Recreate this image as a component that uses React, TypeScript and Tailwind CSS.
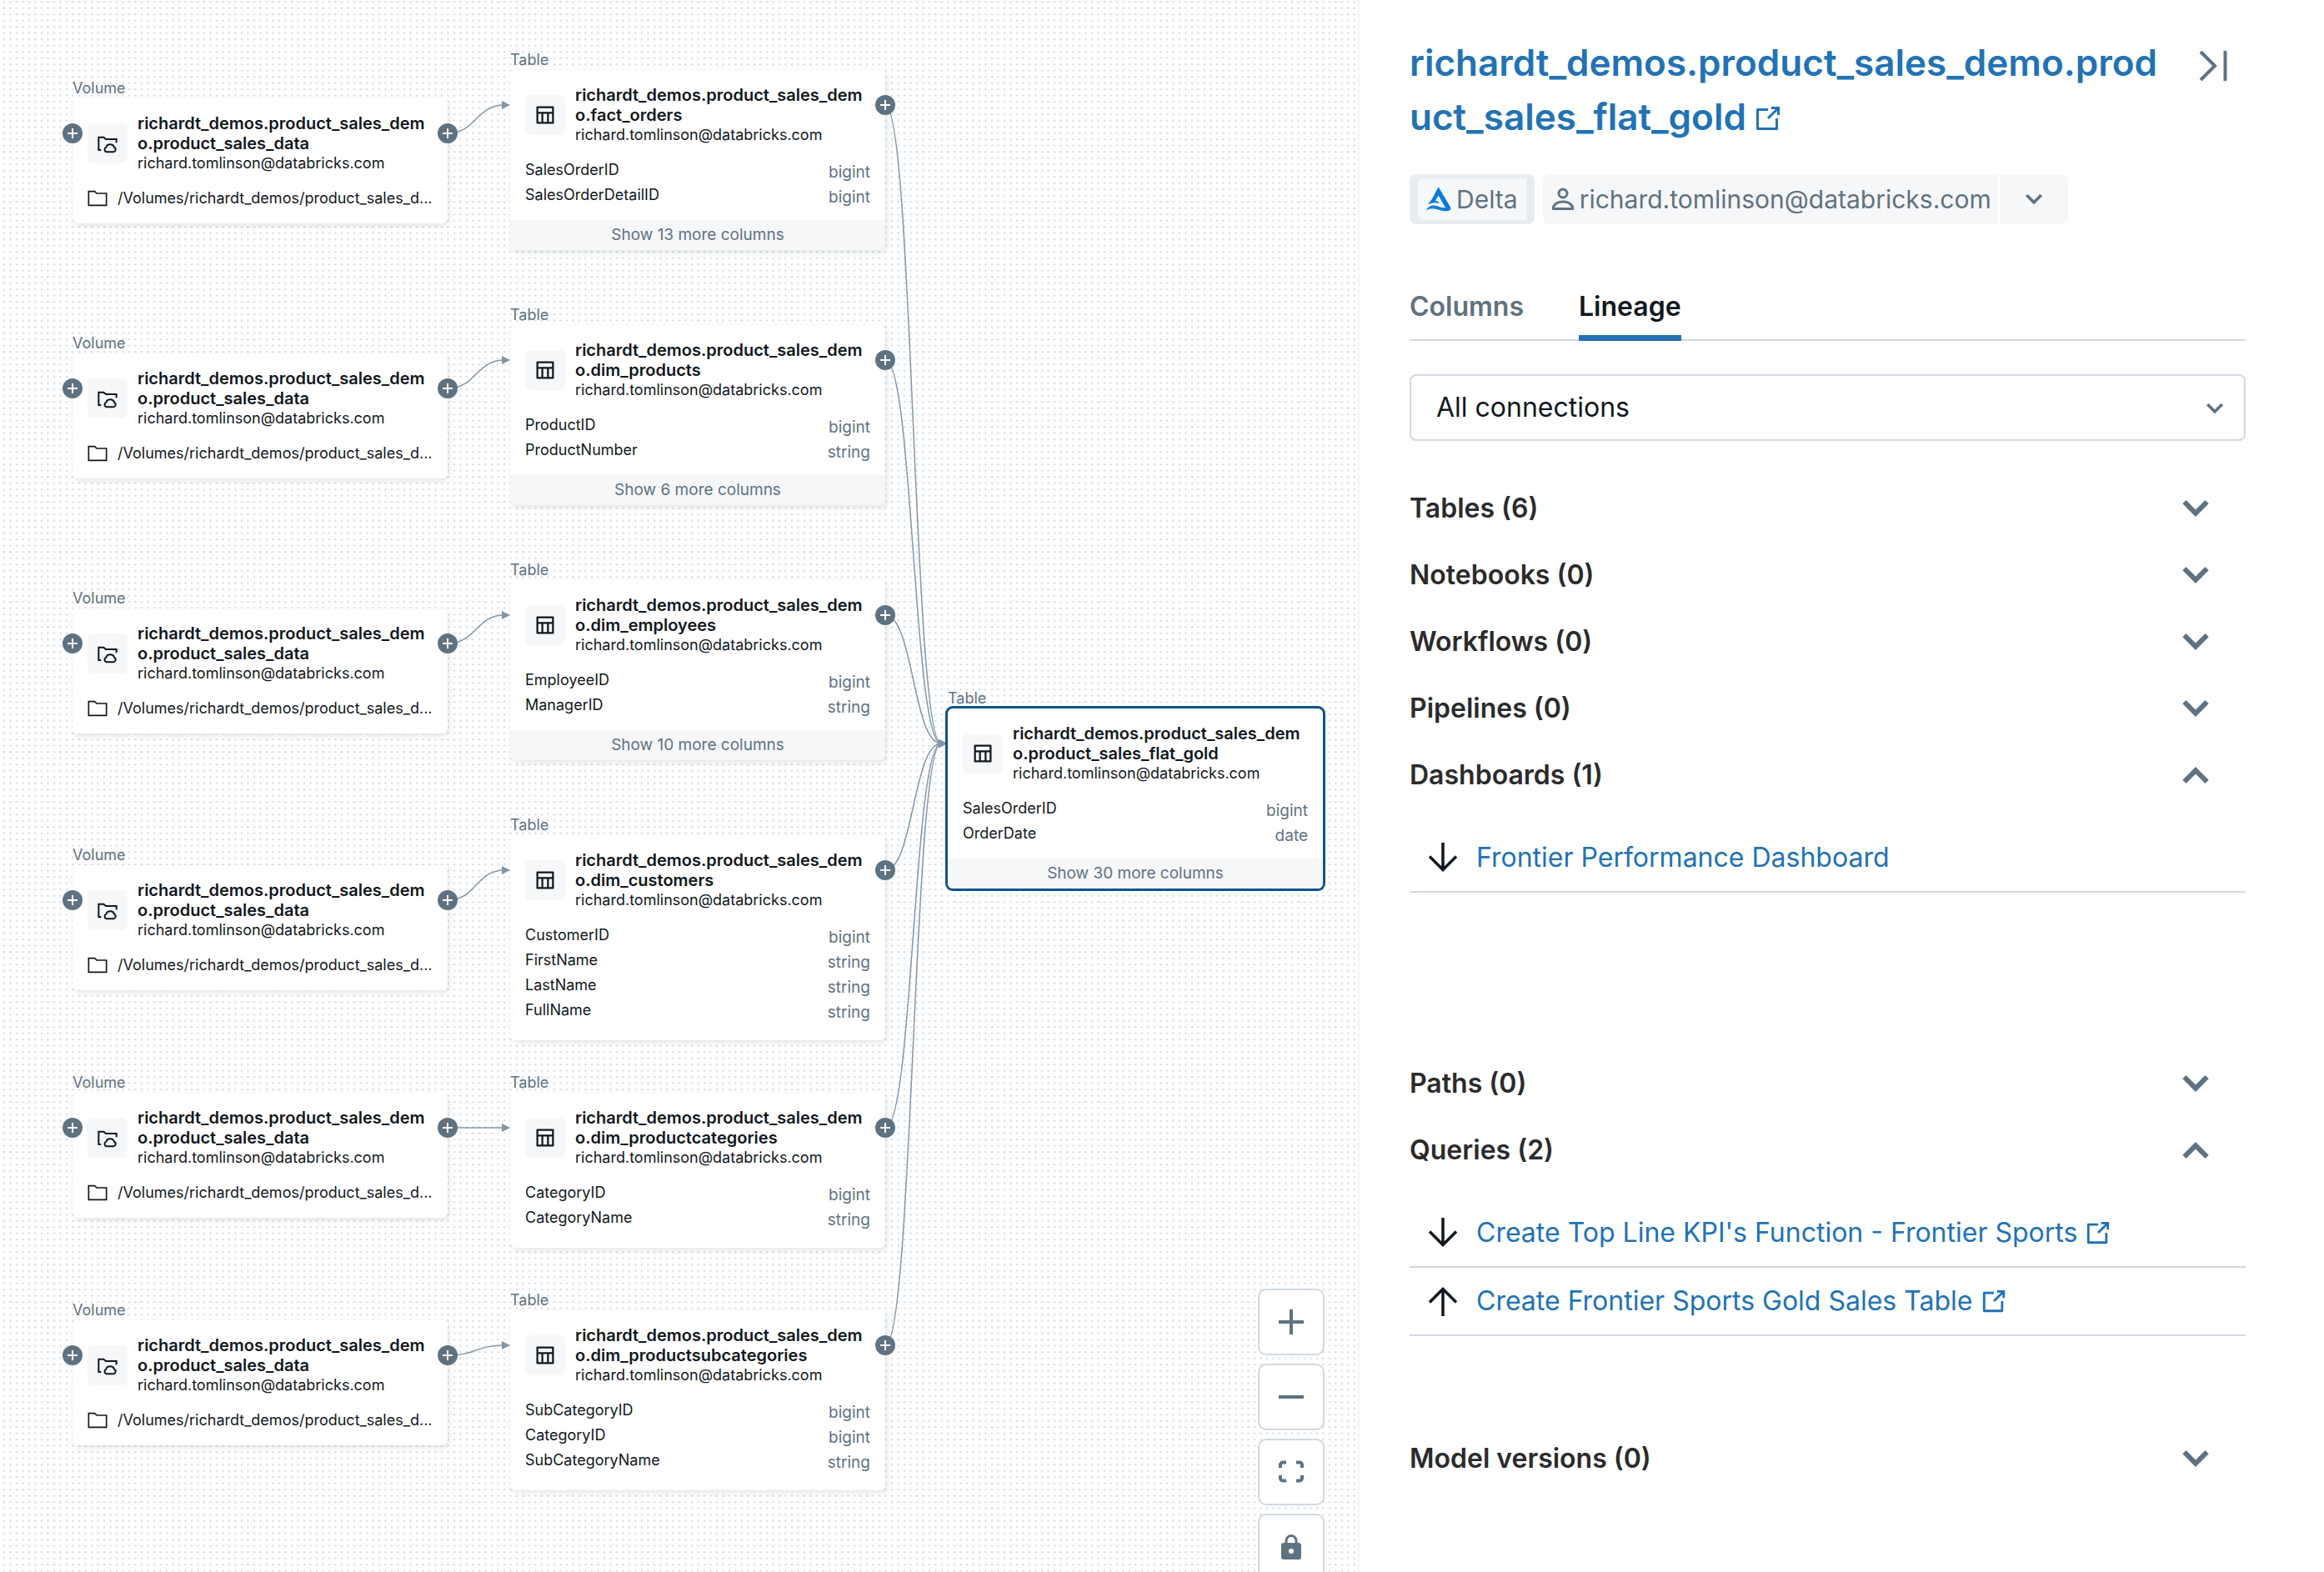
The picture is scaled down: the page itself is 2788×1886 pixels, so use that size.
// App.tsx
import { useState } from 'react';
import type { ReactNode } from 'react';

type Column = { name: string; type: string };

type TableNodeData = {
  id: string;
  title: string;
  x: number;
  y: number;
  columns: Column[];
  more?: number;
  selected?: boolean;
};

const OWNER = 'richard.tomlinson@databricks.com';
const NODE_WIDTH = 450;
const HANDLE_OFFSET = 42;

const volumes = [
  { id: 'v1', x: 87, y: 118 },
  { id: 'v2', x: 87, y: 424 },
  { id: 'v3', x: 87, y: 730 },
  { id: 'v4', x: 87, y: 1038 },
  { id: 'v5', x: 87, y: 1311 },
  { id: 'v6', x: 87, y: 1584 },
];

const tables: TableNodeData[] = [
  {
    id: 't1',
    title: 'richardt_demos.product_sales_demo.fact_orders',
    x: 612,
    y: 84,
    columns: [
      { name: 'SalesOrderID', type: 'bigint' },
      { name: 'SalesOrderDetailID', type: 'bigint' },
    ],
    more: 13,
  },
  {
    id: 't2',
    title: 'richardt_demos.product_sales_demo.dim_products',
    x: 612,
    y: 390,
    columns: [
      { name: 'ProductID', type: 'bigint' },
      { name: 'ProductNumber', type: 'string' },
    ],
    more: 6,
  },
  {
    id: 't3',
    title: 'richardt_demos.product_sales_demo.dim_employees',
    x: 612,
    y: 696,
    columns: [
      { name: 'EmployeeID', type: 'bigint' },
      { name: 'ManagerID', type: 'string' },
    ],
    more: 10,
  },
  {
    id: 't4',
    title: 'richardt_demos.product_sales_demo.dim_customers',
    x: 612,
    y: 1002,
    columns: [
      { name: 'CustomerID', type: 'bigint' },
      { name: 'FirstName', type: 'string' },
      { name: 'LastName', type: 'string' },
      { name: 'FullName', type: 'string' },
    ],
  },
  {
    id: 't5',
    title: 'richardt_demos.product_sales_demo.dim_productcategories',
    x: 612,
    y: 1311,
    columns: [
      { name: 'CategoryID', type: 'bigint' },
      { name: 'CategoryName', type: 'string' },
    ],
  },
  {
    id: 't6',
    title: 'richardt_demos.product_sales_demo.dim_productsubcategories',
    x: 612,
    y: 1572,
    columns: [
      { name: 'SubCategoryID', type: 'bigint' },
      { name: 'CategoryID', type: 'bigint' },
      { name: 'SubCategoryName', type: 'string' },
    ],
  },
];

const goldTable: TableNodeData = {
  id: 'gold',
  title: 'richardt_demos.product_sales_demo.product_sales_flat_gold',
  x: 1137,
  y: 850,
  columns: [
    { name: 'SalesOrderID', type: 'bigint' },
    { name: 'OrderDate', type: 'date' },
  ],
  more: 30,
  selected: true,
};

const ExternalLinkIcon = ({ className }: { className: string }) => (
  <svg viewBox="0 0 16 16" fill="currentColor" className={className} aria-hidden="true">
    <path d="M10 1h5v5h-1.5V3.56L8.53 8.53 7.47 7.47l4.97-4.97H10z" />
    <path d="M1 2.75A.75.75 0 0 1 1.75 2H8v1.5H2.5v10h10V8H14v6.25a.75.75 0 0 1-.75.75H1.75a.75.75 0 0 1-.75-.75z" />
  </svg>
);

const ChevronIcon = ({ up = false, className }: { up?: boolean; className: string }) => (
  <svg viewBox="0 0 16 16" fill="currentColor" className={className} aria-hidden="true">
    {up ? (
      <path d="M8 4.9 13.1 10 12 11.1l-4-4-4 4L2.9 10z" stroke="currentColor" strokeWidth="0.5" />
    ) : (
      <path d="M8 11.1 2.9 6 4 4.9l4 4 4-4L13.1 6z" stroke="currentColor" strokeWidth="0.5" />
    )}
  </svg>
);

const ArrowIcon = ({ up = false }: { up?: boolean }) => (
  <svg
    viewBox="0 0 36 36"
    fill="none"
    stroke="currentColor"
    strokeWidth="3.5"
    className="size-9 shrink-0 text-[#11171C]"
    aria-hidden="true"
  >
    {up ? <path d="M18 36V3M2 19.5 18 3.5l16 16" /> : <path d="M18 0v33M2 16.5l16 16 16-16" />}
  </svg>
);

const TableIcon = () => (
  <svg viewBox="0 0 16 16" fill="currentColor" className="size-6" aria-hidden="true">
    <path
      fillRule="evenodd"
      clipRule="evenodd"
      d="M1 1.75A.75.75 0 0 1 1.75 1h12.5a.75.75 0 0 1 .75.75v12.5a.75.75 0 0 1-.75.75H1.75a.75.75 0 0 1-.75-.75zm1.5.75v3h11v-3zm0 11V7H5v6.500zm4 0h3V7h-3zM11 7v6.500h2.500V7z"
    />
  </svg>
);

const CloudFolderIcon = () => (
  <svg viewBox="0 0 72 72" fill="none" stroke="currentColor" strokeWidth="6" className="size-6" aria-hidden="true">
    <path d="M13 60H4V14h18l8 7h38v13" />
    <path d="M32 67h26a9 9 0 0 0 2-17 15 14 0 0 0-29 0 9 9 0 0 0 1 17z" />
  </svg>
);

const FolderIcon = () => (
  <svg
    viewBox="0 0 72 72"
    fill="none"
    stroke="currentColor"
    strokeWidth="5"
    className="size-6 shrink-0"
    aria-hidden="true"
  >
    <path d="M4 11h22l7 7h35v43H4z" />
  </svg>
);

const DeltaIcon = () => (
  <svg viewBox="84 74 88 88" fill="#077CDC" className="size-[30px]" aria-hidden="true">
    <path d="M127 75l43 72c2 8-6 13-18 13-25 0-35-17-68-4 7-15 24-20 42-13 10 4 18 6 25 4l-24-42-11 18c7 1 12 4 15 9-13-3-26-2-40 4 4-8 9-12 13-18z" />
  </svg>
);

const UserIcon = () => (
  <svg viewBox="0 0 28 28" fill="none" stroke="currentColor" strokeWidth="3" className="size-7" aria-hidden="true">
    <circle cx="14" cy="7" r="5" />
    <path d="M2.500 25.500v-2.500c2-4 6.500-6 11.500-6s9.500 2 11.500 6v2.500z" />
  </svg>
);

const Handle = ({ side }: { side: 'left' | 'right' }) => (
  <button
    type="button"
    aria-label="Expand connections"
    className={`absolute top-[30px] flex size-6 items-center justify-center rounded-full bg-[#5F7281] text-white ${
      side === 'left' ? '-left-3' : '-right-3'
    }`}
  >
    <svg viewBox="0 0 12 12" stroke="currentColor" strokeWidth="2" className="size-3" aria-hidden="true">
      <path d="M6 0v12M0 6h12" />
    </svg>
  </button>
);

const NodeHeader = ({ icon, title }: { icon: ReactNode; title: string }) => (
  <div className="flex items-center gap-3 px-[18px] pt-[18px]">
    <div className="flex size-12 shrink-0 items-center justify-center rounded-md bg-[#F6F7F9]">{icon}</div>
    <div className="w-[354px]">
      <h3 className="text-[20px]/6 font-semibold break-all">{title}</h3>
      <p className="text-lg/6">{OWNER}</p>
    </div>
  </div>
);

const VolumeNode = ({ x, y }: { x: number; y: number }) => (
  <article
    className="absolute w-[450px] rounded-md bg-white shadow-[2px_3px_6px_rgba(27,49,57,0.12)]"
    style={{ left: x, top: y }}
  >
    <span className="absolute -top-6 left-0 text-lg/6 text-[#5F7281]">Volume</span>
    <NodeHeader icon={<CloudFolderIcon />} title="richardt_demos.product_sales_demo.product_sales_data" />
    <div className="flex items-center gap-3 p-[18px] text-lg/6 whitespace-nowrap">
      <FolderIcon />
      <span>/Volumes/richardt_demos/product_sales_d...</span>
    </div>
    <Handle side="left" />
    <Handle side="right" />
  </article>
);

const TableNode = ({ node }: { node: TableNodeData }) => (
  <article
    className={`absolute w-[450px] rounded-md bg-white ${
      node.selected ? 'ring-3 ring-[#0E538B]' : 'shadow-[2px_3px_6px_rgba(27,49,57,0.12)]'
    }`}
    style={{ left: node.x, top: node.y }}
  >
    <span className="absolute -top-6 left-0 text-lg/6 text-[#5F7281]">Table</span>
    <NodeHeader icon={<TableIcon />} title={node.title} />
    <div className={`px-[18px] pt-[18px] ${node.more ? 'pb-3' : 'pb-[18px]'}`}>
      <table className="w-full">
        <tbody>
          {node.columns.map((column) => (
            <tr key={column.name}>
              <td className="p-0 align-top text-lg/6">{column.name}</td>
              <td className="p-0 text-right text-[19px]/[30px] text-[#5F7281]">{column.type}</td>
            </tr>
          ))}
        </tbody>
      </table>
    </div>
    {node.more && (
      <button
        type="button"
        className="flex h-9 w-full items-center justify-center rounded-b-md bg-[#F6F7F9] text-[19px]/[30px] text-[#5F7281]"
      >
        Show {node.more} more columns
      </button>
    )}
    {!node.selected && <Handle side="right" />}
  </article>
);

const edgePath = (x1: number, y1: number, x2: number, y2: number) => {
  const mid = (x1 + x2) / 2;
  return `M${x1} ${y1}C${mid} ${y1} ${mid} ${y2} ${x2} ${y2}`;
};

const Edges = () => (
  <svg className="absolute inset-0 size-full" aria-hidden="true">
    <defs>
      <pattern id="dots" x="1" y="5.700" width="7.500" height="7.500" patternUnits="userSpaceOnUse">
        <circle cx="4" cy="4" r="1.100" fill="#CFD8E1" />
      </pattern>
      <marker
        id="arrow"
        viewBox="0 0 10 10"
        refX="3"
        refY="5"
        markerWidth="10"
        markerHeight="10"
        markerUnits="userSpaceOnUse"
      >
        <path d="M0 0L10 5L0 10Z" fill="#8396A5" />
      </marker>
    </defs>
    <rect width="100%" height="100%" fill="url(#dots)" />
    <g fill="none" stroke="#8396A5" strokeWidth="1.500">
      {volumes.map((volume, i) => (
        <path
          key={volume.id}
          d={edgePath(volume.x + NODE_WIDTH, volume.y + HANDLE_OFFSET, tables[i].x - 7, tables[i].y + HANDLE_OFFSET)}
          markerEnd="url(#arrow)"
        />
      ))}
      {tables.map((table) => (
        <path
          key={table.id}
          d={edgePath(
            table.x + NODE_WIDTH,
            table.y + HANDLE_OFFSET,
            goldTable.x - 8,
            goldTable.y + HANDLE_OFFSET,
          )}
          markerEnd="url(#arrow)"
        />
      ))}
    </g>
  </svg>
);

const ControlButton = ({ label, children }: { label: string; children: ReactNode }) => (
  <button
    type="button"
    aria-label={label}
    className="flex size-20 items-center justify-center rounded-[10px] border-2 border-[#D1D9E1] bg-white text-[#5F7281]"
  >
    <svg viewBox="0 0 30 30" className="size-[30px]" fill="none" stroke="currentColor" strokeWidth="4">
      {children}
    </svg>
  </button>
);

const LineageGraph = () => (
  <main className="relative min-w-0 flex-1 overflow-hidden border-r-2 border-[#F3F5F7]">
    <Edges />
    {volumes.map((volume) => (
      <VolumeNode key={volume.id} x={volume.x} y={volume.y} />
    ))}
    {tables.map((table) => (
      <TableNode key={table.id} node={table} />
    ))}
    <TableNode node={goldTable} />
    <div className="absolute top-[1546px] right-10 flex flex-col gap-[10px]">
      <ControlButton label="Zoom in">
        <path d="M15 0v30M0 15h30" />
      </ControlButton>
      <ControlButton label="Zoom out">
        <path d="M0 15h30" />
      </ControlButton>
      <ControlButton label="Fit view">
        <path d="M2 10V6.500a3 3 0 0 1 3-3h4M21 3.500h4a3 3 0 0 1 3 3V10M28 19v3.500a3 3 0 0 1-3 3h-4M9 25.500H5a3 3 0 0 1-3-3V19" />
      </ControlButton>
      <ControlButton label="Lock">
        <path d="M9 11V7.500a6 6 0 0 1 12 0V11" strokeWidth="3" />
        <path
          fillRule="evenodd"
          stroke="none"
          fill="currentColor"
          d="M6 10h18a3 3 0 0 1 3 3v14a3 3 0 0 1-3 3H6a3 3 0 0 1-3-3V13a3 3 0 0 1 3-3zm9 7a3 3 0 1 0 0 6 3 3 0 0 0 0-6z"
        />
      </ControlButton>
    </div>
  </main>
);

type Item = { label: string; up?: boolean; external?: boolean };

const sections: { title: string; items?: Item[] }[] = [
  { title: 'Tables (6)' },
  { title: 'Notebooks (0)' },
  { title: 'Workflows (0)' },
  { title: 'Pipelines (0)' },
  { title: 'Dashboards (1)', items: [{ label: 'Frontier Performance Dashboard' }] },
  { title: 'Paths (0)' },
  {
    title: 'Queries (2)',
    items: [
      { label: "Create Top Line KPI's Function - Frontier Sports", external: true },
      { label: 'Create Frontier Sports Gold Sales Table', up: true, external: true },
    ],
  },
  { title: 'Model versions (0)' },
];

const DetailsPanel = () => {
  const [filter, setFilter] = useState('all');

  return (
    <aside className="w-[1157px] shrink-0 pt-[43px] pr-[94px] pl-[60px]">
      <header className="flex items-start justify-between">
        <h1 className="w-[920px] text-[44px]/[65px] font-semibold break-all text-[#2272B4]">
          <a href="#table">
            richardt_demos.product_sales_demo.product_sales_flat_gold
            <ExternalLinkIcon className="ml-[10px] inline size-8 align-[-2px]" />
          </a>
        </h1>
        <button type="button" aria-label="Collapse panel" className="mt-[18px] mr-[22px] text-[#5F7281]">
          <svg viewBox="0 0 34 36" fill="none" stroke="currentColor" strokeWidth="4" className="h-9 w-[34px]">
            <path d="M2 1l17 17L2 35M31.500 0v36" />
          </svg>
        </button>
      </header>

      <div className="mt-9 flex gap-[10px] text-[30px]/[50px] text-[#5F7281]">
        <span className="rounded-lg bg-[#E8ECF0] px-[10px] py-[5px]">
          <span className="flex items-center gap-[6px] rounded-l-lg bg-[#F6F7F9] px-[10px]">
            <DeltaIcon />
            Delta
          </span>
        </span>
        <div className="flex gap-[2px]">
          <span className="flex items-center gap-[6px] rounded-l-lg bg-[#F6F7F9] pr-2 pl-[10px]">
            <UserIcon />
            {OWNER}
          </span>
          <button
            type="button"
            aria-label="More owners"
            className="flex w-[82px] items-center justify-center rounded-r-lg bg-[#F6F7F9]"
          >
            <ChevronIcon className="size-[30px]" />
          </button>
        </div>
      </div>

      <nav className="mt-[74px] flex gap-[66px] border-b-2 border-[#D1D9E1] text-[32px]/[50px] font-semibold">
        <button type="button" className="pb-[14px] text-[#5F7281]">
          Columns
        </button>
        <button type="button" className="-mb-[2px] border-b-[7px] border-[#2272B4] pb-[9px] text-[#11171C]">
          Lineage
        </button>
      </nav>

      <div className="relative mt-10">
        <select
          aria-label="Connection filter"
          value={filter}
          onChange={(e) => setFilter(e.target.value)}
          className="h-20 w-full appearance-none rounded-lg border-2 border-[#D1D9E1] bg-white px-[30px] text-[32px] text-[#11171C]"
        >
          <option value="all">All connections</option>
          <option value="upstream">Upstream</option>
          <option value="downstream">Downstream</option>
        </select>
        <ChevronIcon className="pointer-events-none absolute top-[26px] right-[22px] size-[30px] text-[#5F7281]" />
      </div>

      <div className="mt-[41px]">
        {sections.map((section) => (
          <section key={section.title}>
            <button
              type="button"
              aria-expanded={Boolean(section.items)}
              className="flex h-20 w-full items-center justify-between pr-[37px] text-[32px] font-semibold text-[#2B2B2B]"
            >
              {section.title}
              <ChevronIcon up={Boolean(section.items)} className="size-[46px] text-[#5F7281]" />
            </button>
            {section.items && (
              <ul className="min-h-[290px] pt-[19px]">
                {section.items.map((item) => (
                  <li
                    key={item.label}
                    className="flex h-[82px] items-center gap-[22px] border-b-2 border-[#D1D9E1] pl-[22px] text-[32px]"
                  >
                    <ArrowIcon up={item.up} />
                    <a href="#item" className="flex items-center gap-[10px] text-[#2272B4]">
                      {item.label}
                      {item.external && <ExternalLinkIcon className="size-[30px]" />}
                    </a>
                  </li>
                ))}
              </ul>
            )}
          </section>
        ))}
      </div>
    </aside>
  );
};

const App = () => (
  <div className="flex h-screen overflow-hidden bg-white font-['Inter',sans-serif] text-[#11171C]">
    <LineageGraph />
    <DetailsPanel />
  </div>
);

export default App;
